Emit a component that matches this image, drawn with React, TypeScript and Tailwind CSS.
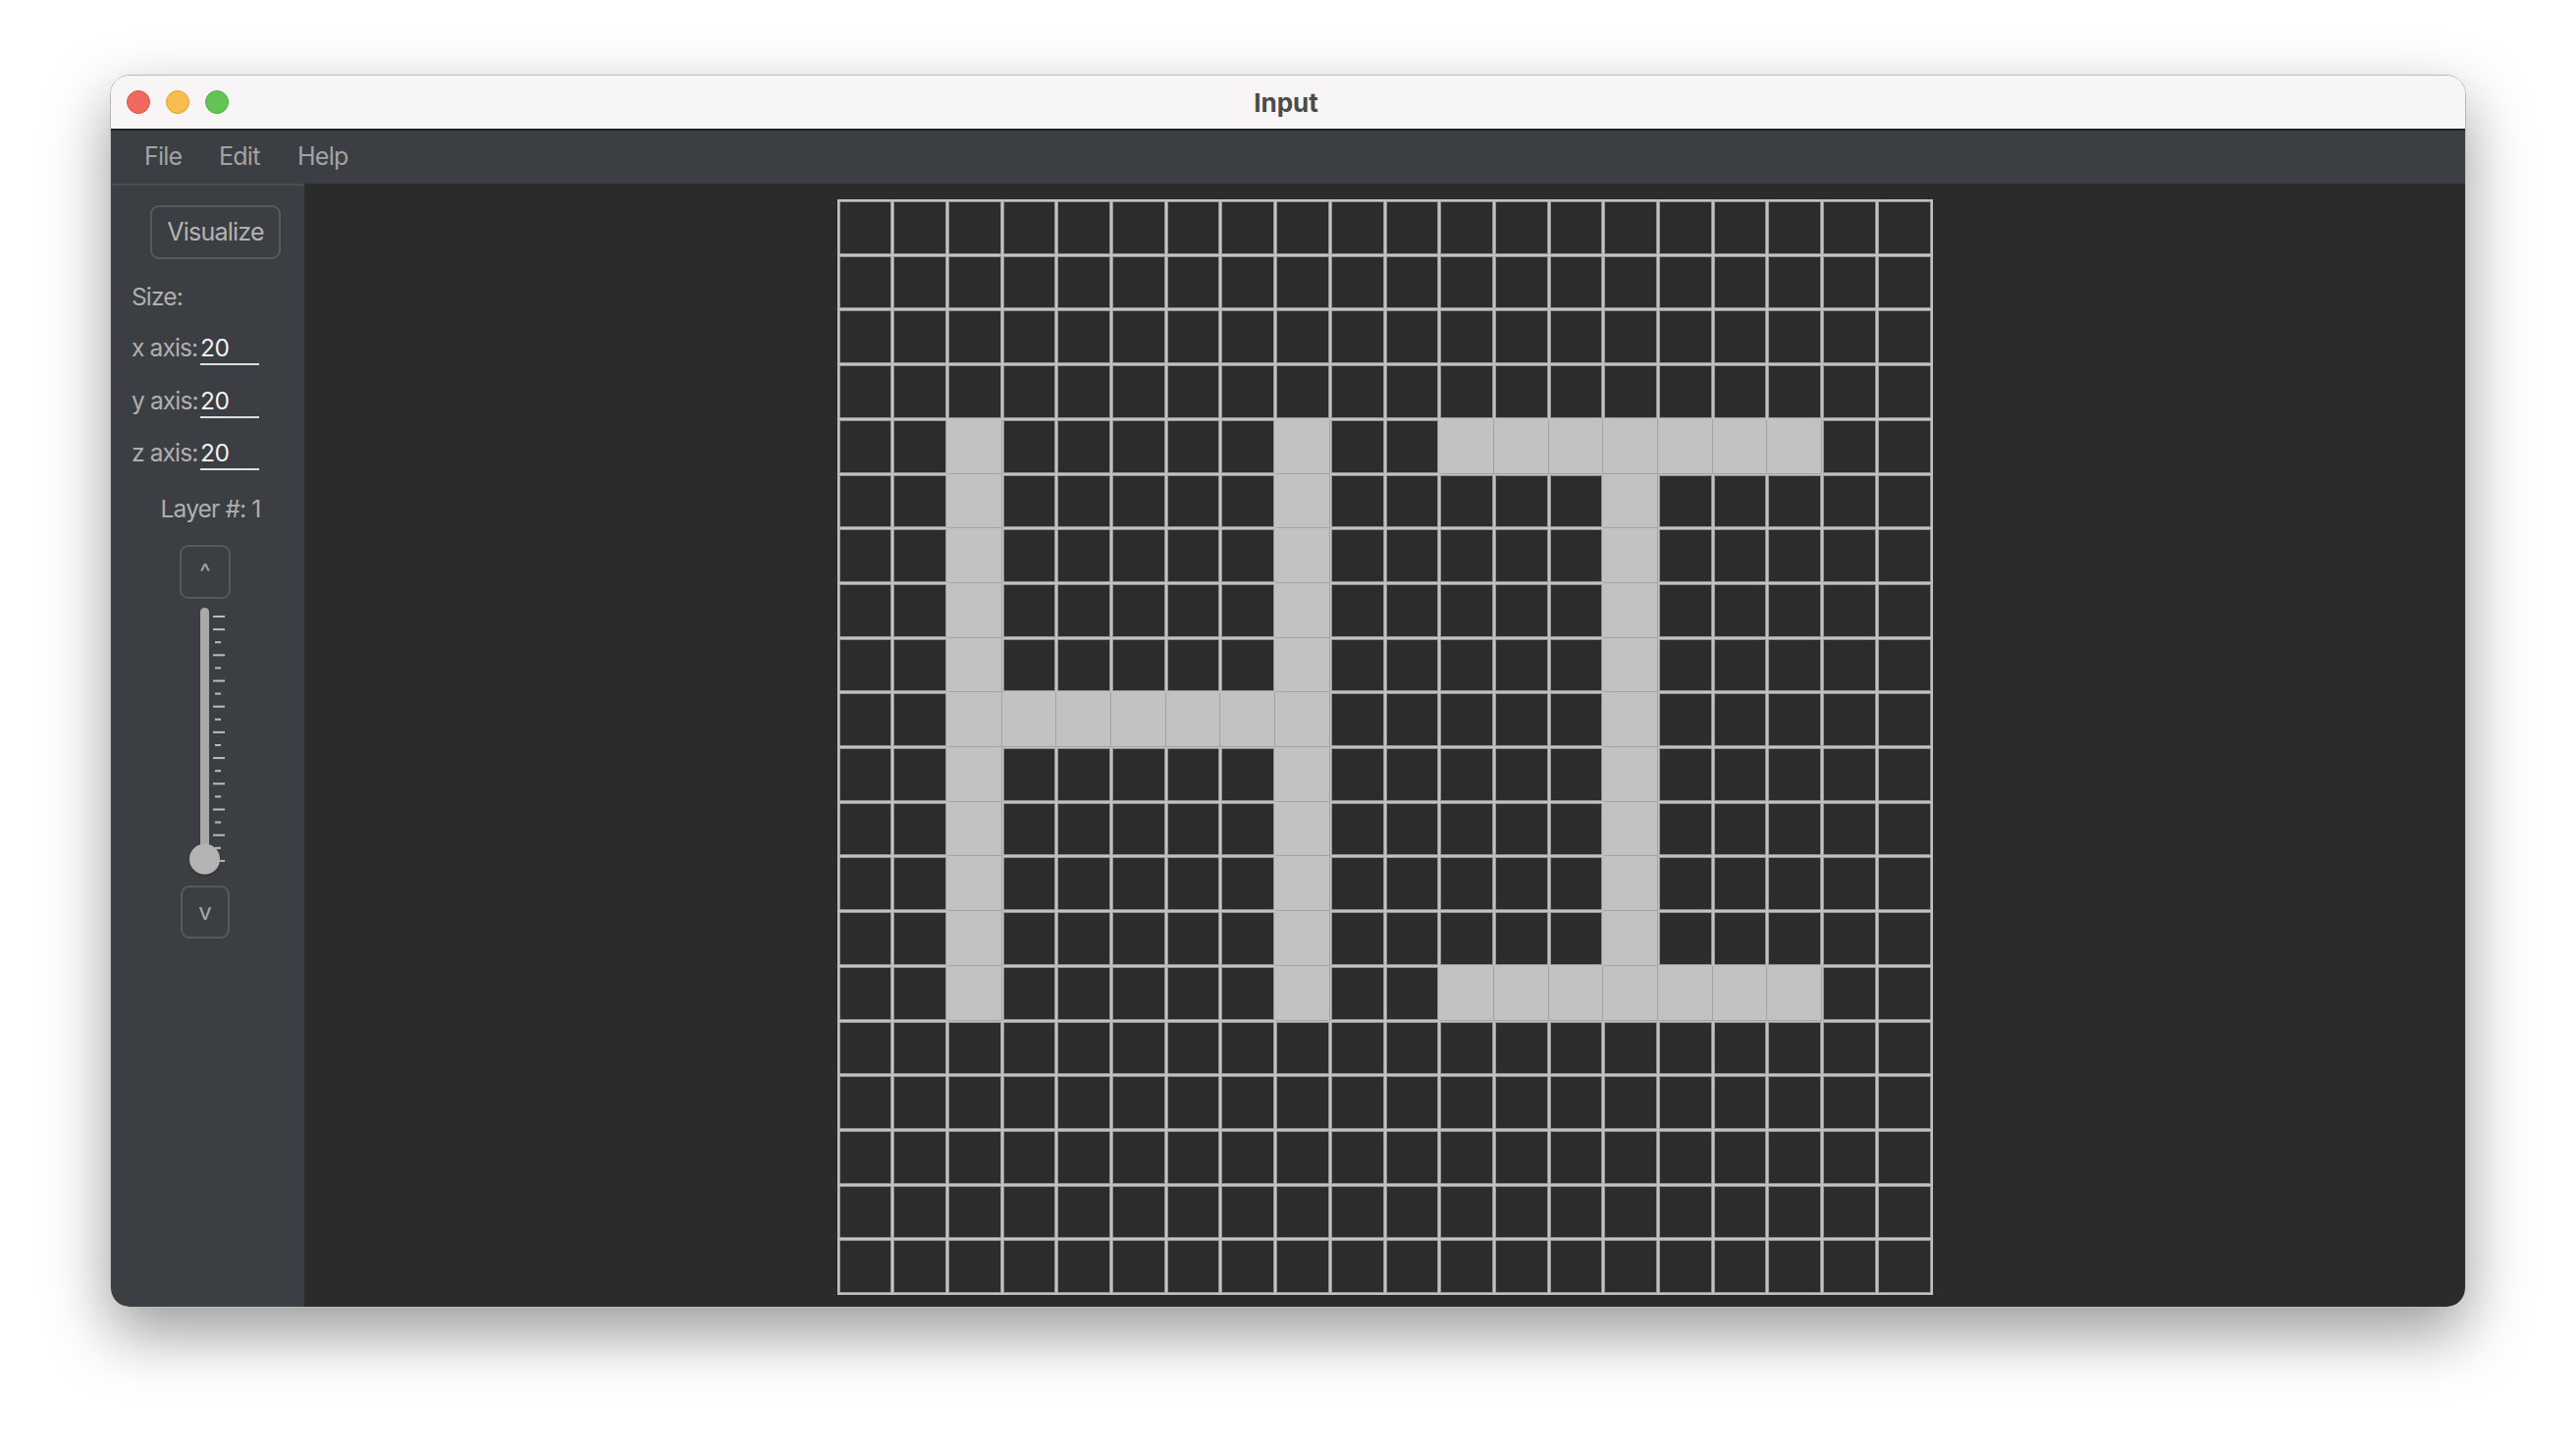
import React from "react";

const FILLED = new Set<string>();
for (let r = 4; r <= 14; r++) {
  FILLED.add(`${r}-2`);
  FILLED.add(`${r}-8`);
}
for (let c = 3; c <= 7; c++) FILLED.add(`9-${c}`);
for (let c = 11; c <= 17; c++) {
  FILLED.add(`4-${c}`);
  FILLED.add(`14-${c}`);
}
for (let r = 5; r <= 13; r++) FILLED.add(`${r}-14`);

function Grid() {
  const cells = [];
  for (let r = 0; r < 20; r++) {
    for (let c = 0; c < 20; c++) {
      const filled = FILLED.has(`${r}-${c}`);
      cells.push(
        filled ? (
          <div key={`${r}-${c}`} className="bg-[#c2c2c2] border-r border-b border-[#a3a3a3]" />
        ) : (
          <div key={`${r}-${c}`} className="bg-[#c2c2c2] p-px">
            <div className="w-full h-full bg-[#2c2c2c] border border-[#939393]" />
          </div>
        )
      );
    }
  }
  return (
    <div className="w-[1116px] h-[1116px] grid grid-cols-20 grid-rows-20 border border-[#bdbdbd] bg-[#c2c2c2]">
      {cells}
    </div>
  );
}

function Slider() {
  const ticks = [];
  for (let i = 0; i < 20; i++) {
    const major = i === 0 || i % 2 === 1;
    const y = 9 + i * 13.1;
    ticks.push(
      <rect key={i} x={major ? 24 : 26} y={y - 1} width={major ? 12 : 6} height={2} fill="#bcbcbc" />
    );
  }
  return (
    <svg width="44" height="274" viewBox="0 0 44 274" className="ml-[80px] mt-[9px] block">
      <defs>
        <filter id="ks" x="-50%" y="-50%" width="200%" height="200%">
          <feDropShadow dx="0" dy="1" stdDeviation="1.2" floodColor="#000" floodOpacity="0.35" />
        </filter>
      </defs>
      <rect x="11" y="0" width="9" height="262" rx="4.5" fill="#a9a9a9" />
      {ticks}
      <circle cx="15.5" cy="256" r="15.5" fill="#b4b4b4" filter="url(#ks)" />
    </svg>
  );
}

function AxisRow({ label, mt }: { label: string; mt: string }) {
  return (
    <div className={`flex items-start pl-[21px] ${mt}`}>
      <div className="h-[32px] flex items-center text-[24.5px] text-[#afafaf] tracking-[-0.035em] w-[70px]">{label}</div>
      <div className="w-[60px] h-[34px] border-b-2 border-[#dedede] flex items-center text-[24.5px] text-[#f2f2f2] tracking-[-0.02em]">
        20
      </div>
    </div>
  );
}

export default function App() {
  return (
    <div className="w-[2624px] h-[1480px] bg-white pt-[76px] pl-[112px] font-['Inter','Noto_Sans',sans-serif]">
      <div className="w-[2400px] h-[1256px] rounded-[20px] overflow-hidden flex flex-col border border-[#b9b9b9] shadow-[0_26px_64px_rgba(0,0,0,0.4)]">
        {/* Title bar */}
        <div className="h-[56px] shrink-0 bg-[#f8f5f6] border-b-2 border-[#1f2022] flex items-center relative">
          <div className="flex items-center gap-[16px] pl-[16px]">
            <div className="w-[24px] h-[24px] rounded-full bg-[#ef6a5e] border border-[#d9554a]" />
            <div className="w-[24px] h-[24px] rounded-full bg-[#f6be4f] border border-[#dea438]" />
            <div className="w-[24px] h-[24px] rounded-full bg-[#61c454] border border-[#4fae42]" />
          </div>
          <div className="flex-1 flex justify-center pr-[124px] text-[26px] font-bold text-[#4b4b4b]">Input</div>
        </div>
        {/* Menu bar */}
        <div className="h-[54px] shrink-0 bg-[#3b3e42] flex items-center pl-[34px] text-[25px] text-[#a3a3a3] tracking-[-0.03em]">
          <span className="w-[76px]">File</span>
          <span className="w-[80px]">Edit</span>
          <span>Help</span>
        </div>
        {/* Content */}
        <div className="flex-1 flex min-h-0">
          <div className="w-[197px] shrink-0 bg-[#3b3e42] border-t-2 border-[#4a4d51] flex flex-col">
            <div className="mt-[20px] ml-[40px] w-[133px] h-[55px] rounded-[9px] border-2 border-[#56595d] flex items-center justify-center text-[25px] text-[#b3b3b3] tracking-[-0.03em]">
              Visualize
            </div>
            <div className="mt-[22px] pl-[21px] h-[32px] flex items-center text-[24.5px] text-[#afafaf] tracking-[-0.035em]">Size:</div>
            <AxisRow label="x axis:" mt="mt-[20px]" />
            <AxisRow label="y axis:" mt="mt-[20px]" />
            <AxisRow label="z axis:" mt="mt-[19px]" />
            <div className="mt-[23px] h-[32px] flex items-center justify-center pl-[6px] text-[24.5px] text-[#afafaf] tracking-[-0.035em]">Layer #: 1</div>
            <div className="mt-[21px] ml-[70px] w-[52px] h-[55px] rounded-[9px] border-2 border-[#56595d] flex items-center justify-center text-[24px] text-[#a9a9a9]">
              ^
            </div>
            <Slider />
            <div className="mt-[9px] ml-[71px] w-[50px] h-[54px] rounded-[9px] border-2 border-[#56595d] flex items-center justify-center text-[24px] text-[#a9a9a9]">
              v
            </div>
          </div>
          <div className="flex-1 bg-[#2b2b2b] flex justify-center items-start pt-[16px]">
            <Grid />
          </div>
        </div>
      </div>
    </div>
  );
}
